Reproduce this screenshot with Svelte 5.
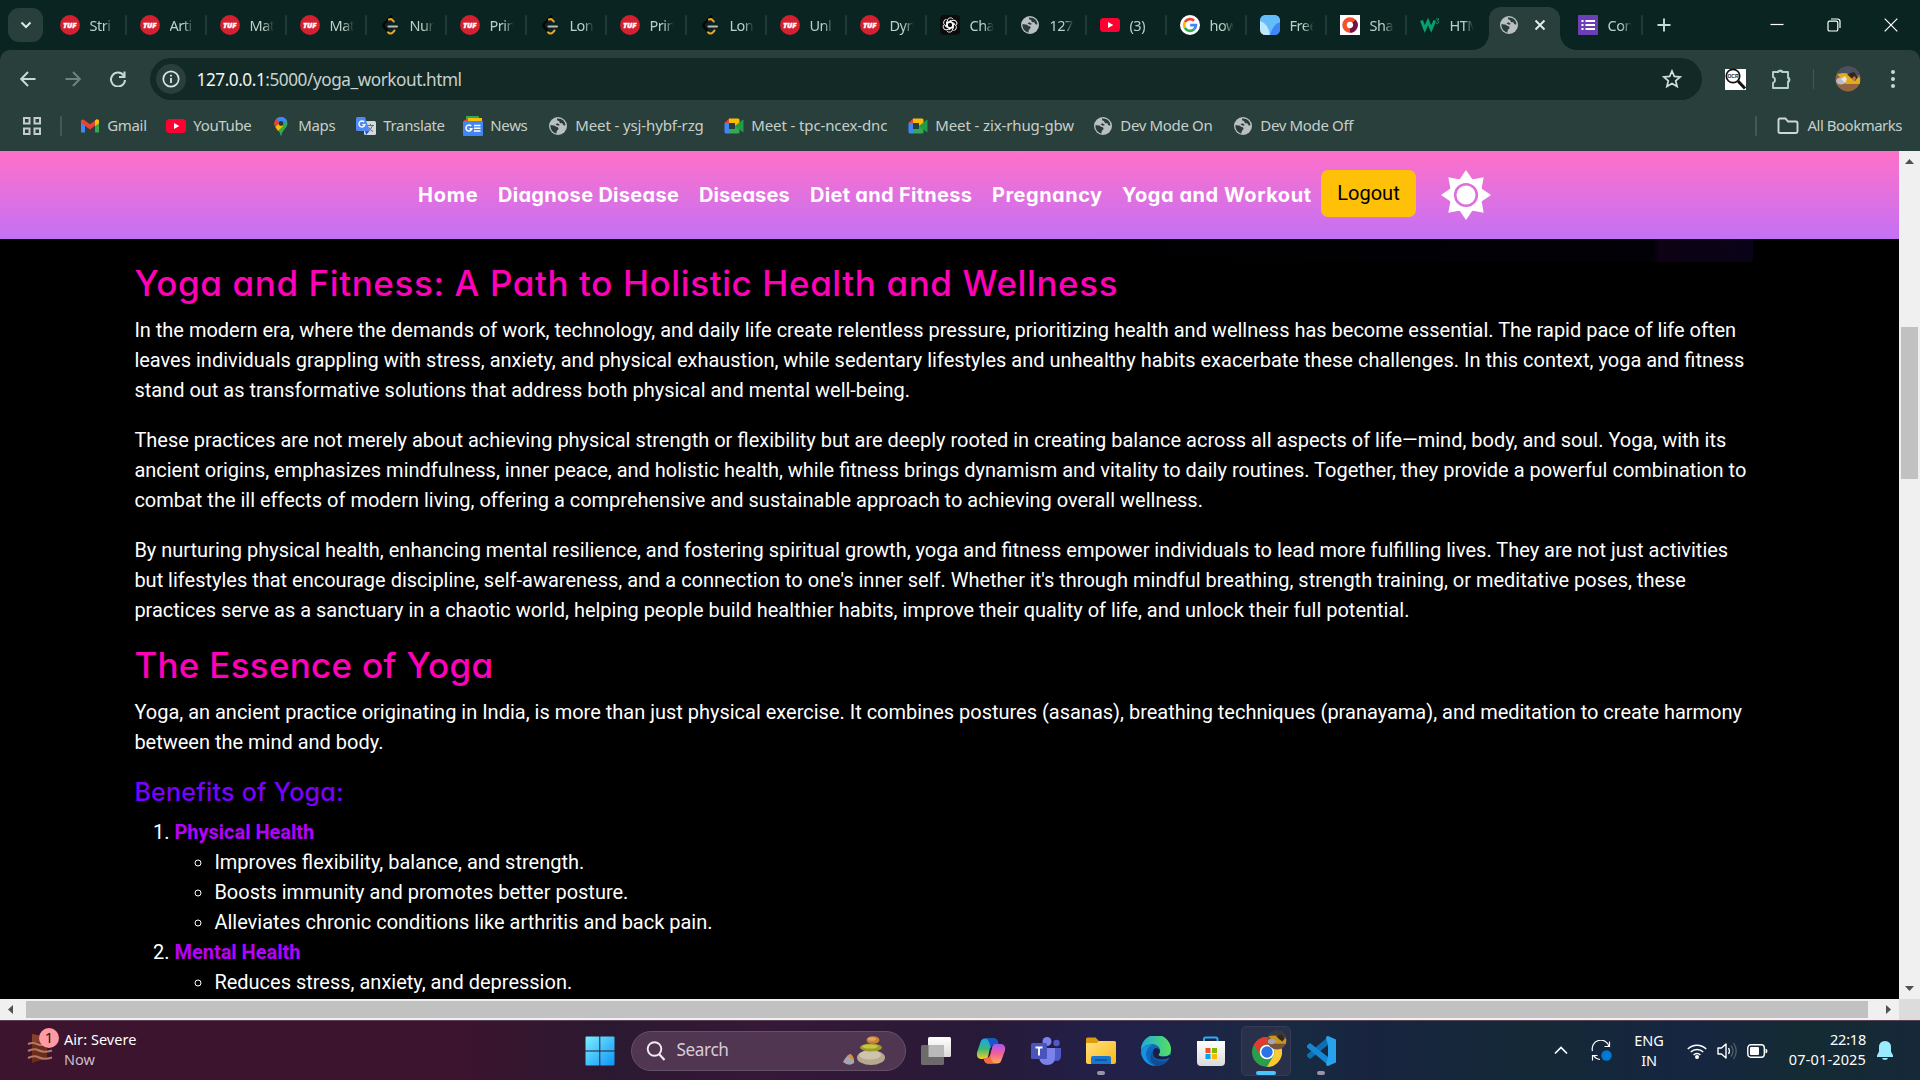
<script>
  const tabs = [
    ['tuf', 'Stri'], ['tuf', 'Arti'], ['tuf', 'Mat'], ['tuf', 'Mat'], ['leet', 'Nun'], ['tuf', 'Prin'],
    ['leet', 'Lon'], ['tuf', 'Prin'], ['leet', 'Lon'], ['tuf', 'Unl'], ['tuf', 'Dyn'], ['gpt', 'Cha'],
    ['globe', '127'], ['yt', '(3)'], ['google', 'how'], ['free', 'Free'], ['share', 'Sha'], ['w3', 'HTM']
  ];
  const bookmarks = [
    ['gmail', 'Gmail', 86], ['yt', 'YouTube', 105], ['maps', 'Maps', 85], ['translate', 'Translate', 107],
    ['news', 'News', 85], ['globe', 'Meet - ysj-hybf-rzg', 176], ['meet', 'Meet - tpc-ncex-dnc', 184],
    ['meet', 'Meet - zix-rhug-gbw', 185], ['globe', 'Dev Mode On', 140], ['globe', 'Dev Mode Off', 130]
  ];
  // label, width and tracking of each link
  const nav = [
    ['Home', 60, 0.8], ['Diagnose Disease', 181, 0.3], ['Diseases', 91, 0.1], ['Diet and Fitness', 162, 0.3],
    ['Pregnancy', 110, 0.5], ['Yoga and Workout', 189, 0.55]
  ];
  const sunRays = [0, 45, 90, 135, 180, 225, 270, 315];
</script>

{#snippet icon(name)}
  <svg class="ico" viewBox="0 0 20 20">
    {#if name === 'tuf'}
      <circle cx="10" cy="10" r="10" fill="#d32030" />
      <text x="9.800" y="12.800" class="tuf" text-anchor="middle">TUF</text>
    {:else if name === 'leet'}
      <path d="M11.500 1 4.500 8.200q-2 2.200 0 4.400l3.500 4" fill="none" stroke="#030504" stroke-width="2.200" stroke-linecap="round" />
      <path d="M9 4.500q2-1 3.500.6l1.300 1.400M8 17.200q2.500 2.500 5 0l1.500-1.700" fill="none" stroke="#f5a31c" stroke-width="2" stroke-linecap="round" />
      <path d="M8.500 11.500h8.500" stroke="#b8bcbb" stroke-width="2" stroke-linecap="round" />
    {:else if name === 'gpt'}
      <rect width="20" height="20" rx="4" fill="#0c0c0c" />
      <g fill="none" stroke="#fff" stroke-width=".9">
        {#each [0, 60, 120, 180, 240, 300] as a}
          <path transform="rotate({a} 10 10)" d="M7.300 11.500V6a3.200 3.200 0 0 1 5.900-1.700M7.300 8.500l3.500-2 4 2.300" />
        {/each}
      </g>
    {:else if name === 'globe'}
      <circle cx="10" cy="10" r="9" fill="#b9bfc2" />
      <path d="M2.500 9c2 .8 3.500 0 5 1.200 1.500 1.300 3.200.6 3 2.600-.2 1.500-2 1.200-2 4.700C5 17 2 13.500 2.500 9ZM9 2.500c0 2 .3 2.300 2.200 2.500 0 2 1.200 2.500 3.200 2.200.5 1.500 1 2.300 3 2.300C17.500 5.500 14 2 9 2.500ZM9.300 7.200 7.500 8.500 10 9.800l2-.8Z" fill="#293d3a" />
    {:else if name === 'yt'}
      <rect y="3" width="20" height="14" rx="3.500" fill="#ff0033" />
      <path d="m8 7 5.300 3L8 13Z" fill="#fff" />
    {:else if name === 'google'}
      <circle cx="10" cy="10" r="10" fill="#fff" />
      <g fill="none" stroke-width="2.700">
        <path d="M4.900 7.100A5.900 5.900 0 0 1 14.100 5.800" stroke="#ea4335" />
        <path d="M4.900 7.100a5.900 5.900 0 0 0 0 5.800" stroke="#fbbc05" />
        <path d="M4.900 12.900a5.900 5.900 0 0 0 8.900 1.600" stroke="#34a853" />
        <path d="M13.800 14.500a5.900 5.900 0 0 0 2.100-4.300H10.200" stroke="#4285f4" />
      </g>
    {:else if name === 'free'}
      <rect width="20" height="20" rx="6" fill="#8fd3fb" />
      <path d="M0 5q7 2 10 15H6q-6 0-6-6Z" fill="#bfe6ff" />
      <path d="M10 20Q9 10 20 7v7q0 6-6 6Z" fill="#3f86f5" />
      <path d="M0 6Q9 9 10 20 13 9 20 7V6q0-6-6-6H6Q0 0 0 6Z" fill="#62bdf8" />
    {:else if name === 'share'}
      <rect width="20" height="20" fill="#fff" />
      <circle cx="10" cy="10" r="5.500" fill="none" stroke="#f4512c" stroke-width="4.500" />
      <path d="M14 6.200a5.500 5.500 0 0 1-4 9.300" fill="none" stroke="#6d1646" stroke-width="4.500" />
    {:else if name === 'w3'}
      <path d="m1.500 5.500 3.300 8.500 3.200-7.500 3.200 7.500 3.600-8.500" fill="none" stroke="#04a16c" stroke-width="3" />
      <path d="M16 4h3l-1.500 1.800q2 .4 1 2-1 1-2.500.2" fill="none" stroke="#04a16c" />
    {:else if name === 'gmail'}
      <path d="M1 4v12.500h4V8Z" fill="#4285f4" />
      <path d="M19 4v12.500h-4V8Z" fill="#34a853" />
      <path d="M15 5.500V10l4-3V4.800q-1-2-3-1Z" fill="#fbbc04" />
      <path d="M1 5q1-2.500 3.200-1L10 8.300 15.800 4v5L10 13.500 4.200 9.200 1 7Z" fill="#ea4335" />
      <path d="M15 4.600 16.500 3.600Q19 3 19 5.500V7l-4 3Z" fill="#fbbc04" />
    {:else if name === 'maps'}
      <path d="M10 1a6.500 6.500 0 0 1 6.500 6.500C16.500 12 11 14 10.500 19.500h-1C9 14 3.500 12 3.500 7.500A6.500 6.500 0 0 1 10 1Z" fill="#34a853" />
      <path d="M10 1a6.500 6.500 0 0 1 6.200 4.500L10 9 5 3.300A6.500 6.500 0 0 1 10 1Z" fill="#4285f4" />
      <path d="M5 3.300 9 7 4.300 11A6.500 6.500 0 0 1 5 3.300Z" fill="#ea4335" />
      <path d="M4.300 11 11 5l1 5-5 5Z" fill="#fbbc04" />
      <circle cx="10" cy="7.500" r="2.400" fill="#233b38" />
    {:else if name === 'translate'}
      <rect x="8" y="5" width="12" height="14" rx="1.500" fill="#d5d9dd" />
      <path d="M11 9.500h7M14.500 8v1.500M16.500 9.500q-1 4-4.500 5.500M12.500 11q1 3 4.500 4.500" fill="none" stroke="#61717c" />
      <path d="M1.500 1H9l4.500 14h-12Q0 15 0 13.500v-11Q0 1 1.500 1Z" fill="#4f8af4" />
      <path d="m10 19 3.500-4H9Z" fill="#2a56c6" />
      <path d="M8.200 6a3 3 0 1 0 .7 2.600H6.400" fill="none" stroke="#fff" stroke-width="1.300" />
    {:else if name === 'news'}
      <path d="M3 0h13v6H3Z" fill="#34a853" />
      <path d="m1 4 15-3 1 5H2Z" fill="#ea4335" />
      <path d="M5 2h14v5H5Z" fill="#fbbc04" />
      <rect y="5" width="20" height="15" rx="1" fill="#4285f4" />
      <path d="M8.200 10a3 3 0 1 0 .7 2.700H6.500M11 9.500h6.500M11 12.300h6.500M11 15h6.500" fill="none" stroke="#fff" stroke-width="1.500" />
    {:else if name === 'meet'}
      <path d="M5 2.500h9q1.500 0 1.500 1.500v4L11 10V7H5Z" fill="#fbbc04" />
      <path d="M5 2.500V7H.5Z" fill="#ea4335" />
      <path d="M.5 7H5v10.500H2Q.5 17.500.5 16Z" fill="#4285f4" />
      <path d="M5 13h6v-3l4.500 2v4q0 1.500-1.500 1.500H5Z" fill="#34a853" />
      <path d="m11 10 7.500-6q1-.5 1 .5v11q0 1-1 .5Z" fill="#1e9c48" />
    {/if}
  </svg>
{/snippet}

<div class="screen">
  <header class="tabstrip">
    <div class="tab-search">
      <svg width="12" height="8" viewBox="0 0 12 8"><path d="m1.500 1.500 4.500 4.500 4.500-4.500" fill="none" stroke="#dbe7e4" stroke-width="2" /></svg>
    </div>
    {#each tabs as [name, label], i}
      <div class="tab" class:last={i === tabs.length - 1}>{@render icon(name)}<span class="tab-label">{label}</span></div>
    {/each}
    <div class="tab-active">
      {@render icon('globe')}
      <svg width="12" height="12" viewBox="0 0 12 12"><path d="m1.500 1.500 9 9m0-9-9 9" stroke="#e4eeeb" stroke-width="1.900" /></svg>
    </div>
    <div class="tab forms">
      <svg class="ico" viewBox="0 0 20 20"><rect width="20" height="20" rx="1" fill="#6b3fb8" /><path d="M7.500 6H17M7.500 10H17M7.500 14H17M3.500 6h2M3.500 10h2M3.500 14h2" stroke="#fff" stroke-width="2" /></svg>
      <span class="tab-label">Con</span>
    </div>
    <svg class="plus" width="14" height="14" viewBox="0 0 14 14"><path d="M7 .5v13M.5 7h13" stroke="#c5dbd5" stroke-width="1.900" /></svg>
    <div class="window-buttons">
      <svg width="14" height="14" viewBox="0 0 14 14"><path d="M.5 6.500h13" stroke="#fff" stroke-width="1.200" /></svg>
      <svg width="14" height="14" viewBox="0 0 14 14"><rect x="1" y="3.200" width="9.800" height="9.800" rx="1.600" fill="none" stroke="#fff" stroke-width="1.200" /><path d="M4 1h6.500Q13 1 13 3.500V10" fill="none" stroke="#fff" stroke-width="1.200" /></svg>
      <svg width="14" height="14" viewBox="0 0 14 14"><path d="m.7.700 12.600 12.600M13.300.700.700 13.300" stroke="#fff" stroke-width="1.200" /></svg>
    </div>
  </header>

  <div class="toolbar">
    <svg class="arrow" width="16" height="16" viewBox="0 0 16 16"><path d="M15.500 8H1.500M8 1 1.200 8 8 15" fill="none" stroke="#c2dbd4" stroke-width="2" /></svg>
    <svg class="arrow" width="16" height="16" viewBox="0 0 16 16"><path d="M.5 8h14M8 1l6.800 7L8 15" fill="none" stroke="#6f827e" stroke-width="2" /></svg>
    <svg class="arrow" width="16" height="16" viewBox="0 0 16 16"><path d="M13.700 4.500A7 7 0 1 0 15 9M14.500.5V6H9" fill="none" stroke="#c2dbd4" stroke-width="2" /></svg>
    <div class="omnibox">
      <div class="info">
        <svg width="18" height="18" viewBox="0 0 18 18"><circle cx="9" cy="9" r="7.700" fill="none" stroke="#e0e5e4" stroke-width="1.700" /><path d="M9 8v5M9 4.800v1.800" stroke="#e0e5e4" stroke-width="1.800" /></svg>
      </div>
      <span class="url">127.0.0.1<i>:5000/yoga_workout.html</i></span>
      <svg class="star" width="20" height="20" viewBox="0 0 20 20"><path d="m10 2 2.300 5.400 5.900.5-4.500 3.900 1.400 5.700-5.100-3-5.100 3 1.400-5.700L1.800 7.900l5.900-.5Z" fill="none" stroke="#d3dedb" stroke-width="1.700" /></svg>
    </div>
    <div class="actions">
      <svg width="22" height="22" viewBox="0 0 22 22"><path d="M0 1h21v21H0Z" fill="#fff" /><circle cx="8" cy="8" r="6.700" fill="#fff" stroke="#111" stroke-width="1.700" /><path d="m13 13 7 7.500" stroke="#111" stroke-width="3" /><text x="8" y="9.800" class="ocr" text-anchor="middle">OCR</text></svg>
      <svg width="22" height="22" viewBox="0 0 22 22"><path d="M2 4h5.500V3h3.500v1H17v6h1v3.500h-1V20H2v-5a3.200 3.200 0 0 0 0-6Z" fill="none" stroke="#b5d3ca" stroke-width="1.900" stroke-linejoin="round" /><path d="M7.500 3.500a1.900 1.900 0 0 1 3.800 0ZM17.500 9.800a2 2 0 0 1 0 4Z" fill="#b5d3ca" /></svg>
      <span class="rule"></span>
      <svg width="26" height="26" viewBox="0 0 26 26">
        <clipPath id="face"><circle cx="13" cy="13" r="12.500" /></clipPath>
        <g clip-path="url(#face)"><path d="M0 0h26v26H0Z" fill="#93643f" /><path d="M0 0h26v9H0Z" fill="#475162" /><path d="m2 8 6-1 11 1 6 4v6H11Z" fill="#e0ac1c" /><path d="m12 8 7-2 4 5-3 4-4-3Z" fill="#33261b" /><ellipse cx="6" cy="15" rx="5" ry="3.500" fill="#b9b9ca" /><path d="m6 13 4-3 2 3-2 4Z" fill="#e9e1da" /><path d="m17 12 3-2 1 3-2 2Z" fill="#c5774b" /></g>
      </svg>
      <svg width="6" height="20" viewBox="0 0 6 20"><g fill="#c2dbd4"><circle cx="3" cy="3" r="2" /><circle cx="3" cy="10" r="2" /><circle cx="3" cy="17" r="2" /></g></svg>
    </div>
  </div>

  <div class="bookmarks">
    <svg class="apps" width="18" height="18" viewBox="0 0 18 18"><path d="M1 1h5.500v5.500H1ZM11.500 1H17v5.500h-5.500ZM1 11.500h5.500V17H1ZM11.500 11.500H17V17h-5.500Z" fill="none" stroke="#c3cdca" stroke-width="2" /></svg>
    <span class="rule"></span>
    {#each bookmarks as [name, label, width]}
      <div class="bookmark" class:wide={label.startsWith('Meet')} style:width="{width}px">{@render icon(name)}<span>{label}</span></div>
    {/each}
    <div class="all">
      <span class="rule"></span>
      <svg width="22" height="18" viewBox="0 0 22 18"><path d="M3 1.500h5.500l2.500 3h8q1.500 0 1.500 1.500v8.500q0 1.500-1.500 1.500H3q-1.500 0-1.500-1.500V3Q1.500 1.500 3 1.500Z" fill="none" stroke="#cfd8d6" stroke-width="1.900" /></svg>
      <span>All Bookmarks</span>
    </div>
  </div>

  <div class="viewport">
    <div class="page">
      <nav>
        {#each nav as [label, width, tracking]}
          <a href="#top" style:width="{width}px" style:letter-spacing="{tracking}px">{label}</a>
        {/each}
        <button>Logout</button>
        <svg width="50" height="50" viewBox="-25 -25 50 50">
          {#each sunRays as a}<path transform="rotate({a})" d="M-7.500-14 0-25 7.500-14Z" fill="#fff" />{/each}
          <circle r="17" fill="#fff" /><circle r="10.800" fill="none" stroke="#dc70df" stroke-width="2.600" />
        </svg>
      </nav>
      <article>
        <div class="banner-edge"></div>
        <h2 class="lead">Yoga and Fitness: A Path to Holistic Health and Wellness</h2>
        <p>In the modern era, where the demands of work, technology, and daily life create relentless pressure, prioritizing health and wellness has become essential. The rapid pace of life often<br />leaves individuals grappling with stress, anxiety, and physical exhaustion, while sedentary lifestyles and unhealthy habits exacerbate these challenges. In this context, yoga and fitness<br />stand out as transformative solutions that address both physical and mental well-being.</p>
        <p>These practices are not merely about achieving physical strength or flexibility but are deeply rooted in creating balance across all aspects of life—mind, body, and soul. Yoga, with its<br />ancient origins, emphasizes mindfulness, inner peace, and holistic health, while fitness brings dynamism and vitality to daily routines. Together, they provide a powerful combination to<br />combat the ill effects of modern living, offering a comprehensive and sustainable approach to achieving overall wellness.</p>
        <p>By nurturing physical health, enhancing mental resilience, and fostering spiritual growth, yoga and fitness empower individuals to lead more fulfilling lives. They are not just activities<br />but lifestyles that encourage discipline, self-awareness, and a connection to one's inner self. Whether it's through mindful breathing, strength training, or meditative poses, these<br />practices serve as a sanctuary in a chaotic world, helping people build healthier habits, improve their quality of life, and unlock their full potential.</p>
        <h2>The Essence of Yoga</h2>
        <p>Yoga, an ancient practice originating in India, is more than just physical exercise. It combines postures (asanas), breathing techniques (pranayama), and meditation to create harmony<br />between the mind and body.</p>
        <h3>Benefits of Yoga:</h3>
        <ol>
          <li><strong>Physical Health</strong>
            <ul>
              <li>Improves flexibility, balance, and strength.</li>
              <li>Boosts immunity and promotes better posture.</li>
              <li>Alleviates chronic conditions like arthritis and back pain.</li>
            </ul>
          </li>
          <li><strong>Mental Health</strong>
            <ul><li>Reduces stress, anxiety, and depression.</li></ul>
          </li>
        </ol>
      </article>
    </div>
    <div class="vbar">
      <svg width="9" height="5" viewBox="0 0 9 5"><path d="M0 5 4.500 0 9 5Z" fill="#505050" /></svg>
      <div class="vthumb"></div>
      <svg width="9" height="5" viewBox="0 0 9 5"><path d="M0 0h9L4.500 5Z" fill="#505050" /></svg>
    </div>
    <div class="hbar">
      <svg width="5" height="9" viewBox="0 0 5 9"><path d="M5 0v9L0 4.500Z" fill="#505050" /></svg>
      <div class="hthumb"></div>
      <svg width="5" height="9" viewBox="0 0 5 9"><path d="M0 0v9l5-4.500Z" fill="#505050" /></svg>
    </div>
    <div class="corner"></div>
  </div>

  <footer class="taskbar">
    <div class="weather">
      <svg width="34" height="38" viewBox="0 0 34 38">
        <path d="m7 7 15 3v21L7 36Z" fill="#6c2c1c" /><path d="m7 7 15 3v5H7Z" fill="#85402b" />
        <path d="M3 17q5-2 9 0t9 0M3 24q6-3 11-.5t13 0M3 31q6-3 11-.5t13 0" fill="none" stroke="#b57963" stroke-width="2" />
        <circle cx="24" cy="11" r="10" fill="#ff99a4" /><text x="24" y="16" class="badge" text-anchor="middle">1</text>
      </svg>
      <div><b>Air: Severe</b><span>Now</span></div>
    </div>
    <div class="dock">
      <svg class="start" width="30" height="30" viewBox="0 0 30 30">
        <defs><linearGradient id="win" x1="0" y1="0" x2="30" y2="30" gradientUnits="userSpaceOnUse"><stop stop-color="#7df0ff" /><stop offset="1" stop-color="#0b93f8" /></linearGradient></defs>
        <path d="M1.500.5h12.800v14H.5v-13q0-1 1-1ZM15.300.500h13.200q1 0 1 1v13H15.300ZM.5 15.500h13.800v14H1.500q-1 0-1-1ZM15.300 15.500h14.200v13q0 1-1 1H15.300Z" fill="url(#win)" />
      </svg>
      <div class="search">
        <svg width="20" height="20" viewBox="0 0 20 20"><circle cx="8.500" cy="8" r="6.800" fill="none" stroke="#f1ecf2" stroke-width="1.900" /><path d="m13 13 5.500 6" stroke="#f1ecf2" stroke-width="2.200" /></svg>
        <span>Search</span>
        <svg class="stones" width="42" height="30" viewBox="0 0 42 30">
          <ellipse cx="28" cy="21.500" rx="14" ry="7.500" fill="#b5a88f" /><ellipse cx="27" cy="19" rx="11" ry="4.500" fill="#cfc3ab" />
          <ellipse cx="28" cy="11.500" rx="11" ry="4" fill="#9e9c28" /><ellipse cx="27" cy="10.500" rx="8" ry="2" fill="#c6c545" />
          <ellipse cx="30" cy="4" rx="6.500" ry="3.800" fill="#c8833c" /><ellipse cx="29" cy="3" rx="4" ry="1.800" fill="#e5a65c" />
          <path d="M0 26q3-6 7-8 5 5 4 9-5 4-11-1Z" fill="#a5a5ac" /><path d="M5 20q2-2 3-2 3 3 3 6-4-1-6-4Z" fill="#d98f45" />
        </svg>
      </div>
      <svg class="app" viewBox="0 0 30 30"><defs><linearGradient id="pane" x2="0" y2="1"><stop stop-color="#fff" /><stop offset="1" stop-color="#dadada" /></linearGradient></defs><rect x="7" y="1" width="23" height="20" rx="1.500" fill="url(#pane)" /><rect y="9" width="23" height="20" rx="1.500" fill="#6c6a6d" /><path d="M7.500 9H21.500q1.500 0 1.500 1.500V21H7.500Z" fill="#b9b9b9" /></svg>
      <svg class="app" viewBox="0 0 30 30">
        <defs><linearGradient id="cpa" x2="0" y2="1"><stop stop-color="#19a8ee" /><stop offset=".5" stop-color="#39b77c" /><stop offset="1" stop-color="#f5cf20" /></linearGradient><linearGradient id="cpb" x2="0" y2="1"><stop stop-color="#a358f2" /><stop offset=".5" stop-color="#f2609a" /><stop offset="1" stop-color="#ffac55" /></linearGradient></defs>
        <path d="M9 2.500h9q3 0 4 4l.5 2H18q-2.500 0-3.300 3l-2 8q-1 3.500-4 3.500H5q-5 0-4-6.500L4.500 6Q5.500 2.500 9 2.500Z" fill="url(#cpa)" />
        <path d="M18 2.500q3 0 4 4l.5 2H18q-2.500 0-3.300 3L13 6q-1-3-3-3.500Z" fill="#1657cf" />
        <path d="M21 27.500h-9q-3 0-4-4L7.500 22h3.200q2.500 0 3.300-3l2-8q1-3 4-3h5q5 .5 4 6.500L25.500 24q-1 3.500-4.500 3.500Z" fill="url(#cpb)" />
        <path d="M12 27.500q-3 0-4-4L7.500 22h3.200q2.500 0 3.300-3l1.500 5q1 3 3.500 3.500Z" fill="#f26a3d" />
        <path d="m13.800 12.500 2.500-1.800-2.400 8.800-2 2.500Z" fill="#2a1a38" />
      </svg>
      <svg class="app" viewBox="0 0 30 30"><circle cx="16" cy="5.500" r="4.500" fill="#7b83eb" /><circle cx="25.500" cy="7" r="3.200" fill="#5059c9" /><path d="M20 12h10v8q0 5-5 5-4 0-5-3Z" fill="#5059c9" /><path d="M8 12h16v9q0 8-8 8-7 0-8-8Z" fill="#7b83eb" /><rect y="7" width="16" height="16" rx="1.500" fill="#4b53bc" /><path d="M4.500 11.500h7M8 11.500v8" stroke="#fff" stroke-width="1.900" /></svg>
      <div class="running"><svg class="app" viewBox="0 0 30 30"><defs><linearGradient id="dir" x2="1" y2="1"><stop stop-color="#ffe07b" /><stop offset="1" stop-color="#f9b818" /></linearGradient></defs><path d="M0 3q0-1.500 1.500-1.500h8L13 5v4H0Z" fill="#dc9b0e" /><path d="M0 7h11l2-2h15.500Q30 5 30 6.500V26q0 2-2 2H2q-2 0-2-2Z" fill="url(#dir)" /><path d="M5 28v-6q0-2 2-2h16q2 0 2 2v6Z" fill="#1777d0" /><path d="M9 24h12" stroke="#0a4d98" stroke-width="1.500" /></svg><i></i></div>
      <svg class="app" viewBox="0 0 30 30">
        <defs><linearGradient id="edge" x2="1"><stop stop-color="#1cacd8" /><stop offset="1" stop-color="#58df61" /></linearGradient></defs>
        <circle cx="15" cy="15" r="15" fill="#0c69be" />
        <path d="M0 14A15 15 0 0 1 30 13.500q0 7-7.500 7-5 0-5-2 2-2 1.500-5Q18 9 12 8 4 8 0 14Z" fill="url(#edge)" />
        <path d="M0 15q4-7 11-6-6 3-6 10 1 8 9 11A15 15 0 0 1 0 15Z" fill="#1593df" />
        <path d="M18.500 14q-4-3-6 0-4 10 8 11 4 0 7.500-1.500-5 6.500-13 6.500-8-5-5-12 2-5 7-5Z" fill="#114e98" />
        <path d="M17.500 18.500q2-2 1-5-4-3-6 0-3 10 8 10 5 0 8.500-2l2 .5-2-3q-4 2-7 1.500-4 0-4.500-2Z" fill="#1e1e42" />
      </svg>
      <svg class="app" viewBox="0 0 30 30"><path d="M8 6V3q0-1.500 1.500-1.500h10.500q1.500 0 1.500 1.500v3" fill="none" stroke="#27adf4" stroke-width="2" /><path d="M1 5h28v21q0 4-4 4H5q-4 0-4-4Z" fill="url(#pane)" /><path d="M9.500 12H14.500v5H9.500Z" fill="#f25022" /><path d="M16 12h5v5H16Z" fill="#7fba00" /><path d="M9.500 18H14.500V23H9.500Z" fill="#00a4ef" /><path d="M16 18h5V23H16Z" fill="#ffb900" /></svg>
      <div class="chrome">
        <svg class="app" viewBox="0 0 30 30"><circle cx="15" cy="15" r="15" fill="#2c9e4b" /><path d="M2 7.500A15 15 0 0 1 28 7.500H15A7.500 7.500 0 0 0 8.500 19Z" fill="#e33b2e" /><path d="M28 7.500A15 15 0 0 1 15 30l6.500-11.300A7.500 7.500 0 0 0 15 7.500Z" fill="#fcc934" /><circle cx="15" cy="15" r="7.300" fill="#fff" /><circle cx="15" cy="15" r="5.700" fill="#2a72e5" /></svg>
        <svg class="avatar" width="20" height="20" viewBox="0 0 26 26"><g clip-path="url(#face)"><path d="M0 0h26v26H0Z" fill="#765238" /><path d="M0 0h26v9H0Z" fill="#363c45" /><path d="m2 8 6-1 11 1 6 4v6H11Z" fill="#c8961d" /><path d="m12 8 7-2 4 5-3 4-4-3Z" fill="#33261b" /><ellipse cx="6" cy="15" rx="5" ry="3.500" fill="#a8a4ac" /></g></svg>
        <i></i>
      </div>
      <div class="running"><svg class="app" viewBox="0 0 30 30"><path d="M22 1v8L4 23 1 20.500v-2Z" fill="#0c6fb4" /><path d="M1 9.500 4 7l18 14v8L1 11.500Z" fill="#1688d1" /><path d="M22 0 30 3.500v23L22 30q-2 0-2-2L22 21V9l-2-7q0-2 2-2Z" fill="#27a2ee" /></svg><i></i></div>
    </div>
    <div class="tray">
      <svg class="caret" width="14" height="9" viewBox="0 0 14 9"><path d="m1 7.500 6-6 6 6" fill="none" stroke="#fff" stroke-width="1.700" /></svg>
      <svg class="sync" width="22" height="22" viewBox="0 0 22 22"><path d="M1.500 11A8.500 8.500 0 0 1 18 6.500M18.500 1.500v5h-5M9 19.500a9 9 0 0 1-6.500-4M1.500 20.500v-5h5" fill="none" stroke="#fff" stroke-width="1.200" /><circle cx="15.500" cy="15.500" r="5.200" fill="#0078d7" /></svg>
      <div class="lang"><span>ENG</span><span>IN</span></div>
      <svg class="wifi" width="20" height="16" viewBox="0 0 20 16"><path d="M.8 6a13 13 0 0 1 18.400 0M3.800 9a8.700 8.700 0 0 1 12.400 0M6.600 12a4.800 4.800 0 0 1 6.800 0" fill="none" stroke="#fff" stroke-width="1.500" /><circle cx="10" cy="14" r="2" fill="#fff" /></svg>
      <svg class="sound" width="21" height="18" viewBox="0 0 21 18"><path d="M1 6h3.500L9 2v14l-4.500-4H1Z" fill="none" stroke="#fff" stroke-width="1.400" stroke-linejoin="round" /><path d="M11.500 6q2 3 0 6" fill="none" stroke="#fff" stroke-width="1.300" /><path d="M14 3.500q4 5.500 0 11M16.500 1q5.500 8 0 16" fill="none" stroke="#52606b" stroke-width="1.300" /></svg>
      <svg class="battery" width="21" height="14" viewBox="0 0 21 14"><rect x=".8" y=".8" width="16.500" height="12.400" rx="3" fill="none" stroke="#fff" stroke-width="1.400" /><rect x="3" y="3" width="9" height="8" rx="1" fill="#fff" /><path d="M18.500 4.500q2 .5 2 2.500t-2 2.500Z" fill="#fff" /></svg>
      <div class="clock"><span>22:18</span><span class="date">07-01-2025</span></div>
      <svg class="bell" width="16" height="19" viewBox="0 0 16 19"><path d="M8 0q6 0 6 6.500v4l2 4V16H0v-1.500l2-4v-4Q2 0 8 0ZM5 17h6q-.5 2-3 2t-3-2Z" fill="#99ebff" /></svg>
    </div>
  </footer>
</div>

<style>
  :global(body) { overflow: hidden; background: #000; }
  .screen { display: flex; flex-direction: column; width: 1920px; height: 1080px; overflow: hidden; background: #293f3b; font-family: "Noto Sans", "Open Sans", sans-serif; }
  .screen :global(*) { box-sizing: border-box; }
  svg { display: block; flex: none; }
  .ico { width: 20px; height: 20px; }
  .tuf { font: italic 800 7.500px "Open Sans", sans-serif; fill: #fff; stroke: #fff; stroke-width: .3px; }
  .ocr { font: 700 5px "Liberation Sans", sans-serif; fill: #222; }
  .rule { flex: none; width: 2px; height: 20px; background: #435955; border-radius: 1px; }

  .tabstrip { display: flex; flex: none; height: 50px; padding-left: 8px; background: #0a2521; }
  .tab-search { display: grid; place-items: center; width: 35px; height: 34px; margin: 8px 17px 0 0; border-radius: 11px; background: #293f3b; }
  .tab { position: relative; display: flex; flex: none; align-items: center; gap: 9.500px; width: 80px; }
  .tab::after { content: ""; position: absolute; left: 65px; top: 15px; width: 2px; height: 20px; border-radius: 1px; background: #233b37; }
  .tab.last::after { display: none; }
  .tab-label { width: 25px; overflow: hidden; white-space: nowrap; color: #bcd0ca; font-size: 14.500px; letter-spacing: -.5px; mask-image: linear-gradient(90deg, #000 55%, transparent 95%); }
  .tab-active { position: relative; display: flex; justify-content: space-between; align-items: center; width: 71px; height: 43px; margin: 7px 0 0 -11px; padding: 0 14px 7px 10px; border-radius: 12px 12px 0 0; background: #293f3b; }
  .tab-active::before, .tab-active::after { content: ""; position: absolute; bottom: 0; width: 16px; height: 16px; }
  .tab-active::before { left: -16px; background: radial-gradient(circle at 0 0, transparent 15.500px, #293f3b 16px); }
  .tab-active::after { right: -16px; background: radial-gradient(circle at 100% 0, transparent 15.500px, #293f3b 16px); }
  .forms { width: 79px; margin-left: 18px; }
  .forms::after { left: 63px; }
  .plus { margin: 18px 0 0 -.5px; }
  .window-buttons { display: flex; gap: 43px; margin: 18px 22px 0 auto; }

  .toolbar { display: flex; flex: none; align-items: center; height: 58px; padding-left: 19.500px; background: #293f3b; box-shadow: 0 -8px 0 0 #0a2521; border-radius: 10px 10px 0 0; }
  .arrow { margin-right: 29px; }
  .omnibox { display: flex; align-items: center; width: 1552px; height: 42px; margin-left: -5px; padding: 0 20px 0 6.500px; border-radius: 21px; background: #132926; }
  .info { display: grid; place-items: center; width: 30px; height: 30px; border-radius: 50%; background: #293f3b; }
  .url { margin-left: 10.500px; color: #f0f5f3; font-size: 17.200px; letter-spacing: -.45px; }
  .url i { font-style: normal; color: #c7d1ce; }
  .star { margin-left: auto; }
  .actions { display: flex; align-items: center; margin-left: 23px; }
  .actions > :nth-child(2) { margin-left: 24px; }
  .actions .rule { width: 1px; height: 20px; margin: 0 21px 0 20px; }
  .actions > :last-child { margin-left: 29px; }

  .bookmarks { display: flex; flex: none; align-items: center; height: 43px; padding: 0 18px 7px 23px; color: #c6cfcc; font-size: 15px; white-space: nowrap; }
  .bookmarks > .rule { margin: 0 18px 0 19px; }
  .bookmark { display: flex; flex: none; align-items: center; gap: 7.300px; letter-spacing: -.35px; }
  .bookmark span, .all span:last-child { margin-top: -2px; }
  .wide { letter-spacing: -.12px; }
  .all { display: flex; align-items: center; margin-left: auto; letter-spacing: -.5px; }
  .all svg { margin: 0 9px 0 20px; }

  .viewport { display: grid; flex: none; grid-template: 848px 21px / 1899px 21px; height: 869px; }
  .page { overflow: hidden; background: #000; }
  nav { display: flex; height: 88px; padding-left: 418px; background: linear-gradient(#ff70c8, #c371f5); }
  nav a { flex: none; margin: 28px 20px 0 0; color: #fff; font: 700 20px/32px Inter, sans-serif; font-feature-settings: "cv11"; text-decoration: none; white-space: nowrap; }
  nav button { width: 95px; height: 47px; margin: 19px 25px 0 -10px; padding: 0 0 2px; border: 0; border-radius: 7px; background: #ffc107; color: #000; font: 20px Roboto, sans-serif; }
  nav svg { margin-top: 19px; }
  article { padding: 0 145px 0 134.400px; color: #fff; font: 19.990px/30px Roboto, sans-serif; white-space: nowrap; }
  .banner-edge { width: 1619px; height: 23px; background: linear-gradient(90deg, #000 50%, #020106 90%, #030108 93.900%, #0e0214 94.200%, #0a0318); }
  h2, h3 { margin: 0 0 10px; font-family: Inter, sans-serif; font-weight: 500; font-feature-settings: "cv11"; }
  h2 { margin-top: -1px; margin-bottom: 11px; color: #ff00b8; font-size: 35px; line-height: 42px; letter-spacing: .27px; }
  h2.lead { margin-top: 0; letter-spacing: .6px; }
  h3 { color: #7a00ff; font-size: 25px; line-height: 30px; letter-spacing: .25px; }
  p { margin: 0 0 20px; }
  ol, ul { margin: 0; padding-left: 40px; }
  strong { color: #b300ff; font-weight: 700; }

  .vbar, .hbar { display: flex; align-items: center; background: #f0f0f0; }
  .vbar { flex-direction: column; padding: 8px 0; }
  .vthumb { width: 17px; height: 152px; margin: 163px 0 auto; background: #c1c1c1; }
  .hbar { padding: 0 8px; }
  .hthumb { width: 1842px; height: 17px; margin: 0 auto 0 13px; background: #c1c1c1; }
  .corner { background: #dcdcdc; }

  .taskbar { display: flex; flex: none; height: 60px; border-top: 1px solid #5a4254; background: linear-gradient(90deg, #3c142e 0, #3c142f 24%, #2b1931 32%, #361837 40%, #271a38 51%, #22204a 58%, #172a40 68%, #182440 71%, #142936 80%, #162541 88%, #142b33 94%, #172838); color: #fff; font-size: 14.500px; line-height: 20px; }
  .weather { display: flex; width: 584.500px; padding: 6px 0 0 25px; letter-spacing: .05px; }
  .weather div { margin: 2px 0 0 5px; }
  .weather b, .weather span { display: block; font-weight: 400; }
  .weather span { color: #cdbec9; }
  .badge { font: 15px "Noto Sans", sans-serif; fill: #311; }
  .dock { display: flex; align-items: center; }
  .start { margin-right: 16px; }
  .search { display: flex; align-items: center; width: 275px; height: 40px; margin-right: 15px; padding: 0 20px 0 14px; border: 1px solid #65506a; border-radius: 20px; background: #503650; color: #d9ccd9; font-size: 17.200px; letter-spacing: -.4px; }
  .search span { margin: -2px 0 0 11px; }
  .stones { margin-left: auto; }
  .app { width: 30px; height: 30px; margin-right: 25px; }
  .running { position: relative; }
  .running i, .chrome i { position: absolute; left: 11px; bottom: -9px; width: 8px; height: 4px; border-radius: 2px; background: #9795a6; }
  .chrome { position: relative; width: 50px; height: 50px; margin: 0 15px 0 -10px; padding: 10px; border: 1px solid #363a57; border-radius: 5px; background: #28304a; }
  .chrome i { left: 14px; bottom: 0; width: 20px; background: #4cc2ff; }
  .avatar { position: absolute; top: 3px; right: 3px; }
  .tray { display: flex; align-items: center; margin-left: auto; padding-right: 27px; white-space: nowrap; }
  .sync { margin: 0 21px 0 23px; }
  .lang { display: flex; flex-direction: column; align-items: center; width: 30px; margin: -2px 23px 0 0; letter-spacing: -.1px; }
  .sound { margin: 0 9px 0 10px; }
  .clock { display: flex; flex-direction: column; align-items: flex-end; width: 78px; margin: -3px 11px 0 20px; letter-spacing: -.2px; }
  .date { letter-spacing: .15px; }
</style>
